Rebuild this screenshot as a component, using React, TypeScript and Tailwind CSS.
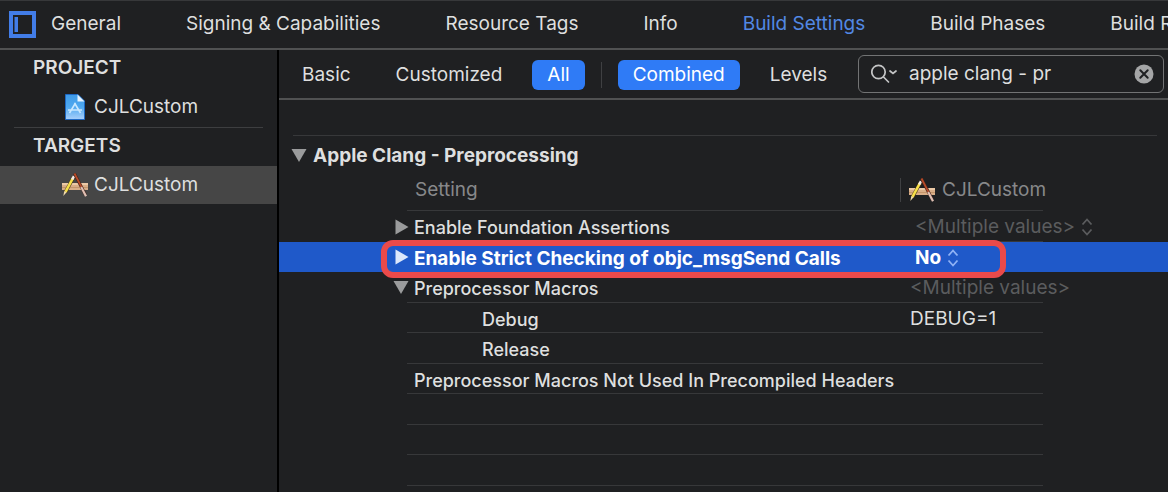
import React, { useState } from "react";

const tabs = [
  "General",
  "Signing & Capabilities",
  "Resource Tags",
  "Info",
  "Build Settings",
  "Build Phases",
  "Build Rules",
];

function AppIcon() {
  return (
    <svg viewBox="0 0 26 24" className="h-6 w-[26px] shrink-0" aria-hidden="true">
      <rect x="0" y="10" width="26" height="7" fill="#d9ae88" />
      <rect x="0" y="10" width="26" height="2" fill="#ecc9a6" />
      <path d="M0 14.500h26" stroke="#b98a60" strokeWidth="0.700" />
      <path d="M11.500 4.500 3.200 19.500" stroke="#4a3a1c" strokeWidth="3.600" />
      <path d="M11 5 3.500 18.800" stroke="#f8e04a" strokeWidth="2.600" />
      <path d="M12 3.200 10.200 6.500" stroke="#f3e9e4" strokeWidth="2.600" />
      <path d="M2.300 18 4.600 19.200 1.300 23z" fill="#f2dcae" />
      <path d="M12.500 0.500 23.500 22" stroke="#42201a" strokeWidth="3" />
      <path d="M12.500 0.500 19.500 14.200" stroke="#b84b28" strokeWidth="1.800" />
      <path d="M19.200 14 24 23.300" stroke="#dfc0b4" strokeWidth="2.200" />
    </svg>
  );
}

function ProjectIcon() {
  return (
    <svg viewBox="0 0 20 26" className="h-[26px] w-5 shrink-0" aria-hidden="true">
      <defs>
        <linearGradient id="doc" x1="0" y1="0" x2="0" y2="1">
          <stop offset="0" stopColor="#3f9be8" />
          <stop offset="0.500" stopColor="#4fa9f0" />
          <stop offset="1" stopColor="#a9d0fb" />
        </linearGradient>
      </defs>
      <path d="M0.500 0.500H13L19.500 7V25.500H0.500z" fill="url(#doc)" stroke="#1d68c4" />
      <path d="M12.500 0.500 19.500 7.500H12.500z" fill="#e6f4ff" />
      <path d="M3 16h14M10.500 9 4.500 19M9.500 9 15.500 19" stroke="#c9e8ff" strokeWidth="1.600" fill="none" />
    </svg>
  );
}

function Triangle({ open, className }: { open?: boolean; className: string }) {
  return (
    <svg viewBox="0 0 16 16" className={`size-4 shrink-0 ${className}`} fill="currentColor" aria-hidden="true">
      {open ? <path d="M0.500 1H15.500L8 14z" /> : <path d="M2.500 0.500V15.500L15.500 8z" />}
    </svg>
  );
}

function Stepper({ className }: { className: string }) {
  return (
    <svg viewBox="0 0 12 18" className={`h-[18px] w-3 shrink-0 ${className}`} fill="none" stroke="currentColor" strokeWidth="1.800" aria-hidden="true">
      <path d="M1.500 6.500 6 1.500 10.500 6.500M1.500 11.500 6 16.500 10.500 11.500" />
    </svg>
  );
}

type Row = {
  name: string;
  open?: boolean;
  toggle?: boolean;
  indent?: boolean;
  selected?: boolean;
  value?: string;
  choices?: string[];
};

const rows: Row[] = [
  { name: "Enable Foundation Assertions", toggle: true, value: "<Multiple values>", choices: ["<Multiple values>", "Yes", "No"] },
  { name: "Enable Strict Checking of objc_msgSend Calls", toggle: true, selected: true, value: "No", choices: ["No", "Yes"] },
  { name: "Preprocessor Macros", toggle: true, open: true, value: "<Multiple values>" },
  { name: "Debug", indent: true, value: "DEBUG=1" },
  { name: "Release", indent: true },
  { name: "Preprocessor Macros Not Used In Precompiled Headers" },
  { name: "" },
  { name: "" },
  { name: "" },
];

function SettingRow({ row }: { row: Row }) {
  const line = row.selected ? "border-[#1f59c9]" : "border-[#37383a]";
  const muted = row.value === "<Multiple values>" ? "text-[#5b5c5e]" : "";
  return (
    <tr className={`odd:h-[31px] even:h-[30px] ${row.selected ? "relative bg-[#1f59c9] font-bold text-white" : ""}`}>
      <td className="p-0">
        {row.toggle && (
          <button aria-label={`Toggle ${row.name}`} className="-mr-[2px] ml-auto flex justify-end">
            <Triangle open={row.open} className={row.selected ? "text-[#dde7fb]" : "text-[#9a9b9c]"} />
          </button>
        )}
        {row.selected && (
          <div className="pointer-events-none absolute -top-[2px] left-[102px] z-10 h-[38px] w-[625px] rounded-xl border-[6px] border-[#ea4a4a]" />
        )}
      </td>
      <th scope="row" className={`border-b pt-1 pr-0 pb-0 text-left whitespace-nowrap ${row.selected ? "font-bold" : "text-[18px] font-medium"} ${row.indent ? "pl-[75px]" : "pl-[7px]"} ${line}`}>
        {row.name}
      </th>
      <td className={`border-b pt-[2px] pr-0 pb-0 whitespace-nowrap ${row.choices ? "pl-[15px]" : "pl-[10px]"} ${line} ${muted}`}>
        {row.choices ? (
          <div className="flex items-center gap-[6px]">
            <select aria-label={row.name} defaultValue={row.value} className="shrink-0 appearance-none field-sizing-content bg-transparent outline-none">
              {row.choices.map((c) => (
                <option key={c}>{c}</option>
              ))}
            </select>
            <Stepper className={row.selected ? "text-[#8fb2f5]" : "text-[#5b5c5e]"} />
          </div>
        ) : (
          row.value
        )}
      </td>
      <td className="p-0" />
    </tr>
  );
}

function Pill({ label, active }: { label: string; active?: boolean }) {
  return (
    <button className={`h-[30px] shrink-0 rounded-md px-[15px] ${active ? "bg-[#2f7bf6] text-white" : ""}`}>{label}</button>
  );
}

export default function App() {
  const [query, setQuery] = useState("apple clang - pr");
  return (
    <div className="flex min-h-screen flex-col overflow-hidden bg-[#1f2022] font-['Inter','Liberation_Sans',sans-serif] text-[19px] leading-6 text-[#dedfdf]">
      <header className="flex h-[50px] items-center overflow-hidden border-t border-b-2 border-t-[#37383a] border-b-[#505152] pl-[9px]">
        <button aria-label="Toggle sidebar" className="mr-[15px] shrink-0">
          <svg viewBox="0 0 27 27" className="size-[27px]" aria-hidden="true">
            <rect x="2" y="2" width="23" height="23" fill="none" stroke="#427de8" strokeWidth="4" />
            <rect x="5.500" y="6" width="3.500" height="15" fill="#427de8" />
          </svg>
        </button>
        <nav className="flex gap-[65px] pb-[2px] whitespace-nowrap">
          {tabs.map((t) => (
            <a key={t} href="#" className={t === "Build Settings" ? "text-[#5288e4]" : ""}>
              {t}
            </a>
          ))}
        </nav>
      </header>

      <div className="flex flex-1">
        <aside className="w-[279px] shrink-0 border-r-2 border-black">
          <h2 className="pt-[6px] pl-[33px] font-semibold">PROJECT</h2>
          <a href="#" className="mt-2 flex h-[38px] items-center gap-[9px] pl-[65px]">
            <ProjectIcon />
            CJLCustom
          </a>
          <hr className="mx-[14px] mt-px border-[#3d3e40]" />
          <h2 className="mt-[6px] pl-[33px] font-semibold">TARGETS</h2>
          <a href="#" className="mt-2 flex h-[38px] items-center gap-[6px] bg-[#464646] pl-[62px]">
            <AppIcon />
            CJLCustom
          </a>
        </aside>

        <main className="min-w-0 flex-1">
          <div className="flex h-[50px] items-center border-b-2 border-[#505152] pr-1 pl-2">
            <div className="flex shrink-0 items-center gap-[15px] pt-[2px]">
              <Pill label="Basic" />
              <Pill label="Customized" />
              <Pill label="All" active />
              <div className="mx-px h-[26px] w-px bg-[#3f4042]" />
              <Pill label="Combined" active />
              <Pill label="Levels" />
            </div>
            <label className="ml-auto flex h-[38px] max-w-[306px] min-w-0 flex-1 items-center rounded-md border border-[#727374] pr-[9px] pl-3">
              <svg viewBox="0 0 28 20" className="h-5 w-7 shrink-0" fill="none" stroke="#c4c5c6" strokeWidth="1.700" strokeLinecap="round" aria-hidden="true">
                <circle cx="7.500" cy="8" r="6.700" />
                <path d="M12.500 13 17.500 18M19 7 22 9.500 25 7" />
              </svg>
              <input
                aria-label="Search settings"
                value={query}
                onChange={(e) => setQuery(e.target.value)}
                className="ml-[10px] min-w-0 flex-1 bg-transparent outline-none"
              />
              <button aria-label="Clear search" onClick={() => setQuery("")}>
                <svg viewBox="0 0 20 20" className="size-5" aria-hidden="true">
                  <circle cx="10" cy="10" r="9.500" fill="#a5a6a7" />
                  <path d="M6.300 6.300 13.700 13.700M13.700 6.300 6.300 13.700" stroke="#1f2022" strokeWidth="2" strokeLinecap="round" />
                </svg>
              </button>
            </label>
          </div>

          <hr className="mt-[35px] mr-[11px] ml-[14px] border-[#37383a]" />
          <h3 className="mt-2 flex items-center gap-[6px] pl-3 font-bold">
            <Triangle open className="text-[#9a9b9c]" />
            Apple Clang - Preprocessing
          </h3>

          <table className="mt-[2px] w-full table-fixed border-separate border-spacing-0">
            <colgroup>
              <col className="w-[128px]" />
              <col className="w-[493px]" />
              <col className="w-[143px]" />
              <col />
            </colgroup>
            <thead>
              <tr className="h-[41px] text-[#87888a]">
                <td className="p-0" />
                <th scope="col" className="border-b border-[#37383a] p-0 pl-2 text-left font-normal">
                  Setting
                </th>
                <th scope="col" className="border-b border-[#37383a] p-0 text-left font-normal">
                  <div className="flex h-6 items-center gap-[7px] border-l border-[#3f4042] pl-2 whitespace-nowrap">
                    <AppIcon />
                    CJLCustom
                  </div>
                </th>
                <td className="p-0" />
              </tr>
            </thead>
            <tbody>
              {rows.map((row, i) => (
                <SettingRow key={i} row={row} />
              ))}
            </tbody>
          </table>
        </main>
      </div>
    </div>
  );
}
